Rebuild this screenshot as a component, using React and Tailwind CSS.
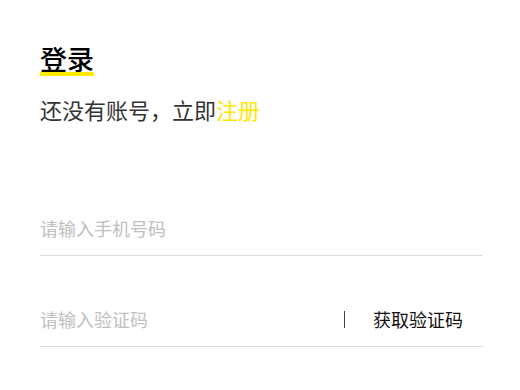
import React from "react";

const FONT = { fontFamily: '"Noto Sans CJK SC", "Noto Sans", sans-serif' };

export default function App() {
  return (
    <div className="w-[520px] h-[390px] bg-white px-10 pt-[41px]" style={FONT}>
      <div className="relative inline-block">
        <h1 className="relative z-10 text-[27px] leading-[36px] font-medium text-black">登录</h1>
        <div className="absolute left-0 right-0 top-[31px] h-[4px] bg-[#ffea00]" />
      </div>
      <p className="mt-[17px] text-[22px] leading-[30px] text-[#333]">
        还没有账号，立即<span className="text-[#ffe600]">注册</span>
      </p>

      <div className="mt-[78px] w-[443px]">
        <div className="h-[54px] flex items-center border-b border-[#d9d9d9]">
          <span className="text-[18px] text-[#c0c0c0]">请输入手机号码</span>
        </div>
        <div className="mt-[37px] h-[54px] flex items-center border-b border-[#d9d9d9]">
          <span className="flex-1 text-[18px] text-[#c0c0c0]">请输入验证码</span>
          <div className="w-px h-[17px] bg-[#444]" />
          <span className="w-[138px] text-center text-[18px] text-[#111] pl-[8px]">获取验证码</span>
        </div>
      </div>
    </div>
  );
}
